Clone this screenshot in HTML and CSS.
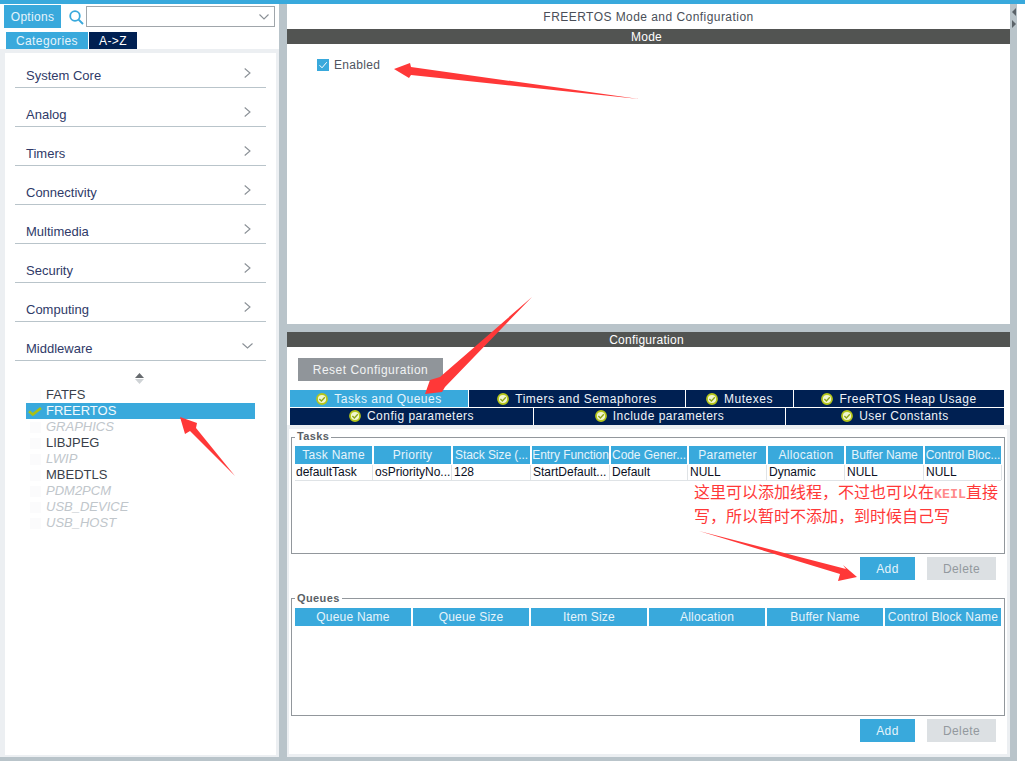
FILE: index.html
```html
<!DOCTYPE html>
<html lang="en">
<head>
  <meta charset="UTF-8">
  <meta name="viewport" content="width=device-width, initial-scale=1.0">
  <title>FREERTOS Mode and Configuration</title>
  <link rel="stylesheet" href="styles.css">
</head>
<body>
  <div class="top-bar"></div>

  <div class="workspace">

    <!-- left side: categories -->
    <div class="side-panel">
      <div class="side-head">
        <div class="search-row">
          <button class="options-button">Options</button>
          <svg class="search-icon" width="15" height="15" viewBox="0 0 15 15">
            <circle cx="6" cy="6" r="4.8" fill="none" stroke="#39a9dc" stroke-width="1.8"/>
            <path d="M9.6 9.6 L14 14" stroke="#39a9dc" stroke-width="2" fill="none"/>
          </svg>
          <div class="combo">
            <svg width="10" height="6" viewBox="0 0 10 6"><path d="M0.5 0.5 L5 5 L9.5 0.5" fill="none" stroke="#8a9096" stroke-width="1.1"/></svg>
          </div>
        </div>
        <div class="side-tabs">
          <div class="side-tab active">Categories</div>
          <div class="side-tab">A-&gt;Z</div>
        </div>
      </div>

      <div class="side-body">
        <div class="cat-row first"><span>System Core</span><svg class="chev" width="7" height="10" viewBox="0 0 7 10"><path d="M0.7 0.5 L6 5 L0.7 9.5" fill="none" stroke="#8a9096" stroke-width="1.1"/></svg></div>
        <div class="cat-row"><span>Analog</span><svg class="chev" width="7" height="10" viewBox="0 0 7 10"><path d="M0.7 0.5 L6 5 L0.7 9.5" fill="none" stroke="#8a9096" stroke-width="1.1"/></svg></div>
        <div class="cat-row"><span>Timers</span><svg class="chev" width="7" height="10" viewBox="0 0 7 10"><path d="M0.7 0.5 L6 5 L0.7 9.5" fill="none" stroke="#8a9096" stroke-width="1.1"/></svg></div>
        <div class="cat-row"><span>Connectivity</span><svg class="chev" width="7" height="10" viewBox="0 0 7 10"><path d="M0.7 0.5 L6 5 L0.7 9.5" fill="none" stroke="#8a9096" stroke-width="1.1"/></svg></div>
        <div class="cat-row"><span>Multimedia</span><svg class="chev" width="7" height="10" viewBox="0 0 7 10"><path d="M0.7 0.5 L6 5 L0.7 9.5" fill="none" stroke="#8a9096" stroke-width="1.1"/></svg></div>
        <div class="cat-row"><span>Security</span><svg class="chev" width="7" height="10" viewBox="0 0 7 10"><path d="M0.7 0.5 L6 5 L0.7 9.5" fill="none" stroke="#8a9096" stroke-width="1.1"/></svg></div>
        <div class="cat-row"><span>Computing</span><svg class="chev" width="7" height="10" viewBox="0 0 7 10"><path d="M0.7 0.5 L6 5 L0.7 9.5" fill="none" stroke="#8a9096" stroke-width="1.1"/></svg></div>
        <div class="cat-row"><span>Middleware</span><svg class="chev-down" width="11" height="6" viewBox="0 0 11 6"><path d="M0.5 0.5 L5.5 5 L10.5 0.5" fill="none" stroke="#8a9096" stroke-width="1.1"/></svg></div>

        <svg class="sort-icon" width="9" height="11" viewBox="0 0 9 11">
          <path d="M4.5 0 L9 5 L0 5 Z" fill="#666a6e"/>
          <path d="M0 6 L9 6 L4.5 11 Z" fill="#cfd3d6"/>
        </svg>

        <div class="mw-list">
          <div class="mw-row"><i class="ghost-box"></i>FATFS</div>
          <div class="mw-row selected">
            <svg class="mw-check" width="14" height="9" viewBox="0 0 14 9"><path d="M1 4.2 L4.8 7.6 L13 1" fill="none" stroke="#a9c015" stroke-width="2.6"/></svg>FREERTOS
          </div>
          <div class="mw-row off"><i class="ghost-box"></i>GRAPHICS</div>
          <div class="mw-row"><i class="ghost-box"></i>LIBJPEG</div>
          <div class="mw-row off"><i class="ghost-box"></i>LWIP</div>
          <div class="mw-row"><i class="ghost-box"></i>MBEDTLS</div>
          <div class="mw-row off"><i class="ghost-box"></i>PDM2PCM</div>
          <div class="mw-row off"><i class="ghost-box"></i>USB_DEVICE</div>
          <div class="mw-row off"><i class="ghost-box"></i>USB_HOST</div>
        </div>
      </div>
    </div>

    <div class="split-v"></div>

    <!-- right side: mode + configuration -->
    <div class="main-panel">
      <div class="mode-pane">
        <div class="pane-title">FREERTOS Mode and Configuration</div>
        <div class="dark-bar">Mode</div>
        <label class="enabled-row">
          <span class="tick-box">
            <svg width="12" height="12" viewBox="0 0 12 12"><path d="M2.5 6.2 L5 8.8 L9.8 3.2" fill="none" stroke="#fff" stroke-width="1"/></svg>
          </span>
          Enabled
        </label>
      </div>

      <div class="split-h"></div>

      <div class="config-pane">
        <div class="dark-bar">Configuration</div>
        <div class="reset-row"><button class="reset-button">Reset Configuration</button></div>

        <div class="tab-row">
          <div class="tab active w178"><svg class="ok" width="12" height="12" viewBox="0 0 12 12"><circle cx="6" cy="6" r="5" fill="#f1f6cf" stroke="#b5c61a" stroke-width="1.8"/><path d="M3.4 6 L5.4 8 L8.8 4.2" fill="none" stroke="#8fa516" stroke-width="1.3"/></svg>Tasks and Queues</div>
          <div class="tab w216"><svg class="ok" width="12" height="12" viewBox="0 0 12 12"><circle cx="6" cy="6" r="5" fill="#f1f6cf" stroke="#b5c61a" stroke-width="1.8"/><path d="M3.4 6 L5.4 8 L8.8 4.2" fill="none" stroke="#8fa516" stroke-width="1.3"/></svg>Timers and Semaphores</div>
          <div class="tab w107"><svg class="ok" width="12" height="12" viewBox="0 0 12 12"><circle cx="6" cy="6" r="5" fill="#f1f6cf" stroke="#b5c61a" stroke-width="1.8"/><path d="M3.4 6 L5.4 8 L8.8 4.2" fill="none" stroke="#8fa516" stroke-width="1.3"/></svg>Mutexes</div>
          <div class="tab w210"><svg class="ok" width="12" height="12" viewBox="0 0 12 12"><circle cx="6" cy="6" r="5" fill="#f1f6cf" stroke="#b5c61a" stroke-width="1.8"/><path d="M3.4 6 L5.4 8 L8.8 4.2" fill="none" stroke="#8fa516" stroke-width="1.3"/></svg>FreeRTOS Heap Usage</div>
        </div>
        <div class="tab-row second">
          <div class="tab w243"><svg class="ok" width="12" height="12" viewBox="0 0 12 12"><circle cx="6" cy="6" r="5" fill="#f1f6cf" stroke="#b5c61a" stroke-width="1.8"/><path d="M3.4 6 L5.4 8 L8.8 4.2" fill="none" stroke="#8fa516" stroke-width="1.3"/></svg>Config parameters</div>
          <div class="tab w251"><svg class="ok" width="12" height="12" viewBox="0 0 12 12"><circle cx="6" cy="6" r="5" fill="#f1f6cf" stroke="#b5c61a" stroke-width="1.8"/><path d="M3.4 6 L5.4 8 L8.8 4.2" fill="none" stroke="#8fa516" stroke-width="1.3"/></svg>Include parameters</div>
          <div class="tab w218"><svg class="ok" width="12" height="12" viewBox="0 0 12 12"><circle cx="6" cy="6" r="5" fill="#f1f6cf" stroke="#b5c61a" stroke-width="1.8"/><path d="M3.4 6 L5.4 8 L8.8 4.2" fill="none" stroke="#8fa516" stroke-width="1.3"/></svg>User Constants</div>
        </div>

        <div class="tab-frame">
          <div class="tab-content">

            <fieldset class="group">
              <legend>Tasks</legend>
              <div class="grid-head nine">
                <div>Task Name</div>
                <div>Priority</div>
                <div class="tight">Stack Size (...</div>
                <div class="tight">Entry Function</div>
                <div class="tight">Code Gener...</div>
                <div>Parameter</div>
                <div>Allocation</div>
                <div class="tight">Buffer Name</div>
                <div class="tight">Control Bloc...</div>
              </div>
              <div class="grid-row nine">
                <div>defaultTask</div>
                <div>osPriorityNo...</div>
                <div>128</div>
                <div>StartDefault...</div>
                <div>Default</div>
                <div>NULL</div>
                <div>Dynamic</div>
                <div>NULL</div>
                <div>NULL</div>
              </div>
              <p class="note">这里可以添加线程，不过也可以在<span class="keil">KEIL</span>直接写，所以暂时不添加，到时候自己写</p>
            </fieldset>
            <div class="button-row">
              <button class="add-button">Add</button>
              <button class="delete-button">Delete</button>
            </div>

            <fieldset class="group queues">
              <legend>Queues</legend>
              <div class="grid-head six">
                <div>Queue Name</div>
                <div>Queue Size</div>
                <div>Item Size</div>
                <div>Allocation</div>
                <div>Buffer Name</div>
                <div>Control Block Name</div>
              </div>
            </fieldset>
            <div class="button-row">
              <button class="add-button">Add</button>
              <button class="delete-button">Delete</button>
            </div>

          </div>
        </div>
      </div>
    </div>

    <div class="split-v thin">
      <svg class="split-arrow" width="4" height="8" viewBox="0 0 4 8"><path d="M4 0 L4 8 L0 4 Z" fill="#5b6369"/></svg>
      <svg class="split-arrow" width="4" height="8" viewBox="0 0 4 8"><path d="M0 0 L4 4 L0 8 Z" fill="#5b6369"/></svg>
    </div>
  </div>

  <!-- red arrows drawn on top of the screenshot -->
  <svg class="arrows" width="1025" height="761" viewBox="0 0 1025 761">
    <path d="M394 69 L410 63 L411 67 L639 99 L411 75 L409 78 Z" fill="#ff3838"/>
    <path d="M532 297 L445 387 L442 392 L425 394 L430 380 L440 377 Z" fill="#ff3838"/>
    <path d="M180 417 L197 423 L196 428 L235 476 L190 431 L185 434 Z" fill="#ff3838"/>
    <path d="M699 531 L846 569 L843 565 L857 577 L838 581 L840 574 Z" fill="#ff3838"/>
  </svg>
</body>
</html>
```

FILE: styles.css
```css
*{
  box-sizing: border-box;
}

body{
  margin: 0;
  width: 1025px;
  height: 761px;
  overflow: hidden;
  background-color: #fff;
  font-family: "Liberation Sans", Arial, sans-serif;
  font-size: 12px;
  position: relative;
}

button{
  border: none;
  font-family: inherit;
  font-size: 12px;
  padding: 0;
}

.top-bar{
  height: 4px;
  background-color: #39a9dc;
}

.workspace{
  display: flex;
  width: 1017px;
  height: 757px;
  padding-bottom: 4px;
  background-color: #b9c4ca;
}

.split-v{
  width: 8px;
  flex-shrink: 0;
}

.split-v.thin{
  width: 7px;
  padding: 4px 0 0 2px;
  display: flex;
  flex-direction: column;
  gap: 4px;
}

.split-arrow{
  display: block;
}

/* left panel */

.side-panel{
  width: 279px;
  flex-shrink: 0;
  display: flex;
  flex-direction: column;
}

.side-head{
  height: 45px;
  background-color: #fff;
  padding: 1px 0 0 4px;
}

.search-row{
  display: flex;
  align-items: flex-start;
  height: 23px;
}

.options-button{
  width: 57px;
  height: 23px;
  background-color: #39a9dc;
  color: #e6f4fb;
  letter-spacing: 0.3px;
}

.search-icon{
  margin: 5px 0 0 8px;
}

.combo{
  width: 189px;
  height: 21px;
  margin: 1px 0 0 2px;
  border: 1px solid #a0a6ab;
  display: flex;
  align-items: center;
  justify-content: flex-end;
  padding-right: 5px;
}

.side-tabs{
  display: flex;
  gap: 1px;
  margin: 4px 0 0 2px;
}

.side-tab{
  height: 17px;
  width: 48px;
  line-height: 18px;
  text-align: center;
  background-color: #002052;
  color: #fff;
  letter-spacing: 0.4px;
}

.side-tab.active{
  width: 82px;
  background-color: #39a9dc;
  color: #e6f4fb;
}

.side-body{
  flex: 1;
  background-color: #fff;
  margin: 0;
  border: solid #eceff2;
  border-width: 4px 3px 2px 5px;
  padding: 0 10px;
}

.cat-row{
  height: 39px;
  display: flex;
  justify-content: space-between;
  align-items: flex-end;
  border-bottom: 1px solid #b9c4ca;
  padding: 0 15px 4px 11px;
  font-size: 13px;
  line-height: 15px;
  color: #2f3a68;
}

.cat-row.first{
  height: 35px;
}

.chev{
  margin-bottom: 5px;
}

.chev-down{
  margin: 0 -2px 7px 0;
}

.sort-icon{
  display: block;
  margin: 12px 0 0 120px;
}

.mw-list{
  margin: 3px 0 0 11px;
  width: 229px;
}

.mw-row{
  height: 16px;
  line-height: 16px;
  font-size: 13px;
  color: #3a3f4a;
  display: flex;
  align-items: center;
  padding-left: 20px;
}

.mw-row.off{
  color: #c0c6cb;
  font-style: italic;
}

.mw-row.selected{
  background-color: #39a9dc;
  color: #f2fafd;
}

.ghost-box{
  width: 11px;
  height: 11px;
  margin-left: -16px;
  margin-right: 5px;
  background-color: #fbfbfc;
}

.mw-check{
  margin-left: -18px;
  margin-right: 4px;
}

/* right panel */

.main-panel{
  width: 723px;
  flex-shrink: 0;
  display: flex;
  flex-direction: column;
}

.mode-pane{
  height: 320px;
  background-color: #fff;
  flex-shrink: 0;
}

.pane-title{
  height: 25px;
  line-height: 26px;
  text-align: center;
  color: #4a4f58;
  letter-spacing: 0.45px;
}

.dark-bar{
  height: 15px;
  line-height: 16px;
  text-align: center;
  padding-right: 4px;
  background-color: #525452;
  color: #fff;
  letter-spacing: 0.25px;
}

.enabled-row{
  display: flex;
  align-items: center;
  gap: 5px;
  margin: 14px 0 0 30px;
  color: #4f5560;
  letter-spacing: 0.3px;
}

.tick-box{
  width: 12px;
  height: 12px;
  background-color: #39a9dc;
  display: block;
}

.tick-box svg{
  display: block;
}

.split-h{
  height: 8px;
  flex-shrink: 0;
}

.config-pane{
  flex: 1;
  background-color: #fff;
  display: flex;
  flex-direction: column;
}

.reset-row{
  padding: 11px 0 9px 11px;
}

.reset-button{
  display: block;
  width: 145px;
  height: 23px;
  background-color: #90959a;
  color: #f1f3f4;
  letter-spacing: 0.5px;
}

.tab-row{
  display: flex;
  gap: 1px;
  padding-left: 3px;
  margin-bottom: 1px;
}

.tab{
  height: 17px;
  display: flex;
  align-items: center;
  justify-content: center;
  gap: 6px;
  background-color: #002052;
  color: #eef3f8;
  letter-spacing: 0.5px;
}

.tab-row.second .tab{
  padding-bottom: 2px;
}

.tab.active{
  background-color: #39a9dc;
  color: #e6f4fb;
}

.w178{ width: 178px; }
.w216{ width: 216px; }
.w107{ width: 107px; }
.w210{ width: 210px; }
.w243{ width: 243px; }
.w251{ width: 251px; }
.w218{ width: 218px; }

.tab-frame{
  flex: 1;
  margin-top: -1px;
  background-color: #eceff2;
  padding: 4px 3px 3px 2px;
  display: flex;
  min-width: 0;
}

.tab-content{
  flex: 1;
  min-width: 0;
  background-color: #fff;
  padding: 1px 2px 0 2px;
}

.group{
  margin: 0;
  padding: 2px 3px 0 3px;
  border: 1px solid #92979c;
  height: 124px;
  min-width: 0;
}

.group.queues{
  margin-top: 11px;
  padding-top: 3px;
  height: 125px;
}

.group legend{
  height: 14px;
  line-height: 13px;
  padding: 0 2px;
  margin-left: 0;
  font-size: 11px;
  font-weight: bold;
  color: #5a5f66;
  letter-spacing: 0.4px;
}

.group.queues legend{
  line-height: 15px;
}

.grid-head,
.grid-row{
  display: grid;
  column-gap: 2px;
}

.nine{
  grid-template-columns: 77px 77px 77px 77px 76px 77px 76px 77px 76px;
}

.six{
  grid-template-columns: repeat(6, minmax(0, 1fr));
}

.grid-head div{
  height: 18px;
  line-height: 18px;
  text-align: center;
  background-color: #39a9dc;
  color: #e6f4fb;
  white-space: nowrap;
  overflow: hidden;
  letter-spacing: 0.3px;
}

.grid-head div.tight{
  letter-spacing: -0.06px;
}

.six div{
  letter-spacing: 0.2px;
}

.grid-row{
  margin-top: 1px;
  border-bottom: 1px solid #dfe3e6;
}

.grid-row div{
  height: 15px;
  line-height: 15px;
  padding-left: 1px;
  color: #0a0f1e;
  white-space: nowrap;
  overflow: hidden;
  box-shadow: 1px 0 0 #dfe3e6;
}

.note{
  margin: 0 0 0 399px;
  width: 306px;
  font-family: "Noto Sans CJK SC", sans-serif;
  font-size: 16px;
  line-height: 20px;
  color: #ff3838;
}

.keil{
  font-family: "Liberation Mono", monospace;
  font-size: 13.33px;
  font-weight: bold;
  color: #ff8a8a;
}

.button-row{
  display: flex;
  justify-content: flex-end;
  gap: 12px;
  padding: 3px 9px 0 0;
}

.add-button{
  width: 55px;
  height: 23px;
  background-color: #39a9dc;
  color: #e6f4fb;
  letter-spacing: 0.4px;
}

.delete-button{
  width: 69px;
  height: 23px;
  background-color: #dce0e3;
  color: #93999e;
  letter-spacing: 0.4px;
}

.arrows{
  position: absolute;
  left: 0;
  top: 0;
  pointer-events: none;
}
```
